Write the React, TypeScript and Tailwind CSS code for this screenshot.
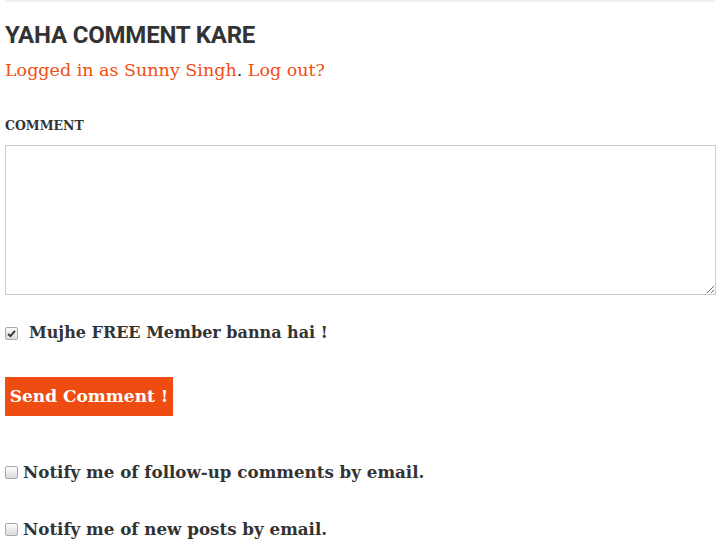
function Box({ checked = false }: { checked?: boolean }) {
  return (
    <span className="relative inline-flex h-[13px] w-[13px] shrink-0">
      <input
        type="checkbox"
        defaultChecked={checked}
        className="m-0 h-[13px] w-[13px] appearance-none rounded-[2px] border border-[#a9a9a9] bg-gradient-to-b from-[#fcfcfc] to-[#dcdcdc]"
      />
      {checked && (
        <svg
          viewBox="0 0 13 13"
          className="pointer-events-none absolute inset-0 h-[13px] w-[13px]"
        >
          <path d="M3 6.8 L5.4 9.2 L10 3.8" fill="none" stroke="#333" strokeWidth="1.8" />
        </svg>
      )}
    </span>
  );
}

export default function App() {
  return (
    <div className="min-h-[543px] bg-white px-[5px] text-[#333] [font-family:'DejaVu_Serif',serif]">
      <div className="w-[710px] border-t-2 border-[#eeeeee]" />
      <h3 className="mt-[19px] text-[24px] font-bold leading-[28px] tracking-[-0.2px] text-[#333] [font-family:Roboto,sans-serif]">
        YAHA COMMENT KARE
      </h3>
      <p className="mt-[8px] text-[17.5px] leading-[26px] text-[#f04e12]">
        <a href="#">Logged in as Sunny Singh</a>
        <span className="text-[#333]">.</span> <a href="#">Log out?</a>
      </p>
      <label className="mt-[34px] block text-[12.5px] font-bold leading-[18px] text-[#333]">
        COMMENT
      </label>
      <textarea className="mt-[10px] block h-[150px] w-[711px] border border-[#cccccc] bg-white" />
      <div className="mt-[26px] flex items-center">
        <Box checked />
        <span className="ml-[11px] text-[16px] font-bold leading-[24px]">
          Mujhe FREE Member banna hai !
        </span>
      </div>
      <button className="mt-[32px] flex h-[39px] w-[168px] items-center justify-center bg-[#ef4c12] text-[17px] font-bold text-white">
        Send Comment !
      </button>
      <div className="mt-[44px] flex items-center">
        <Box />
        <span className="ml-[5px] text-[16.7px] font-bold leading-[24px]">
          Notify me of follow-up comments by email.
        </span>
      </div>
      <div className="mt-[33px] flex items-center">
        <Box />
        <span className="ml-[5px] text-[16.7px] font-bold leading-[24px]">
          Notify me of new posts by email.
        </span>
      </div>
    </div>
  );
}
